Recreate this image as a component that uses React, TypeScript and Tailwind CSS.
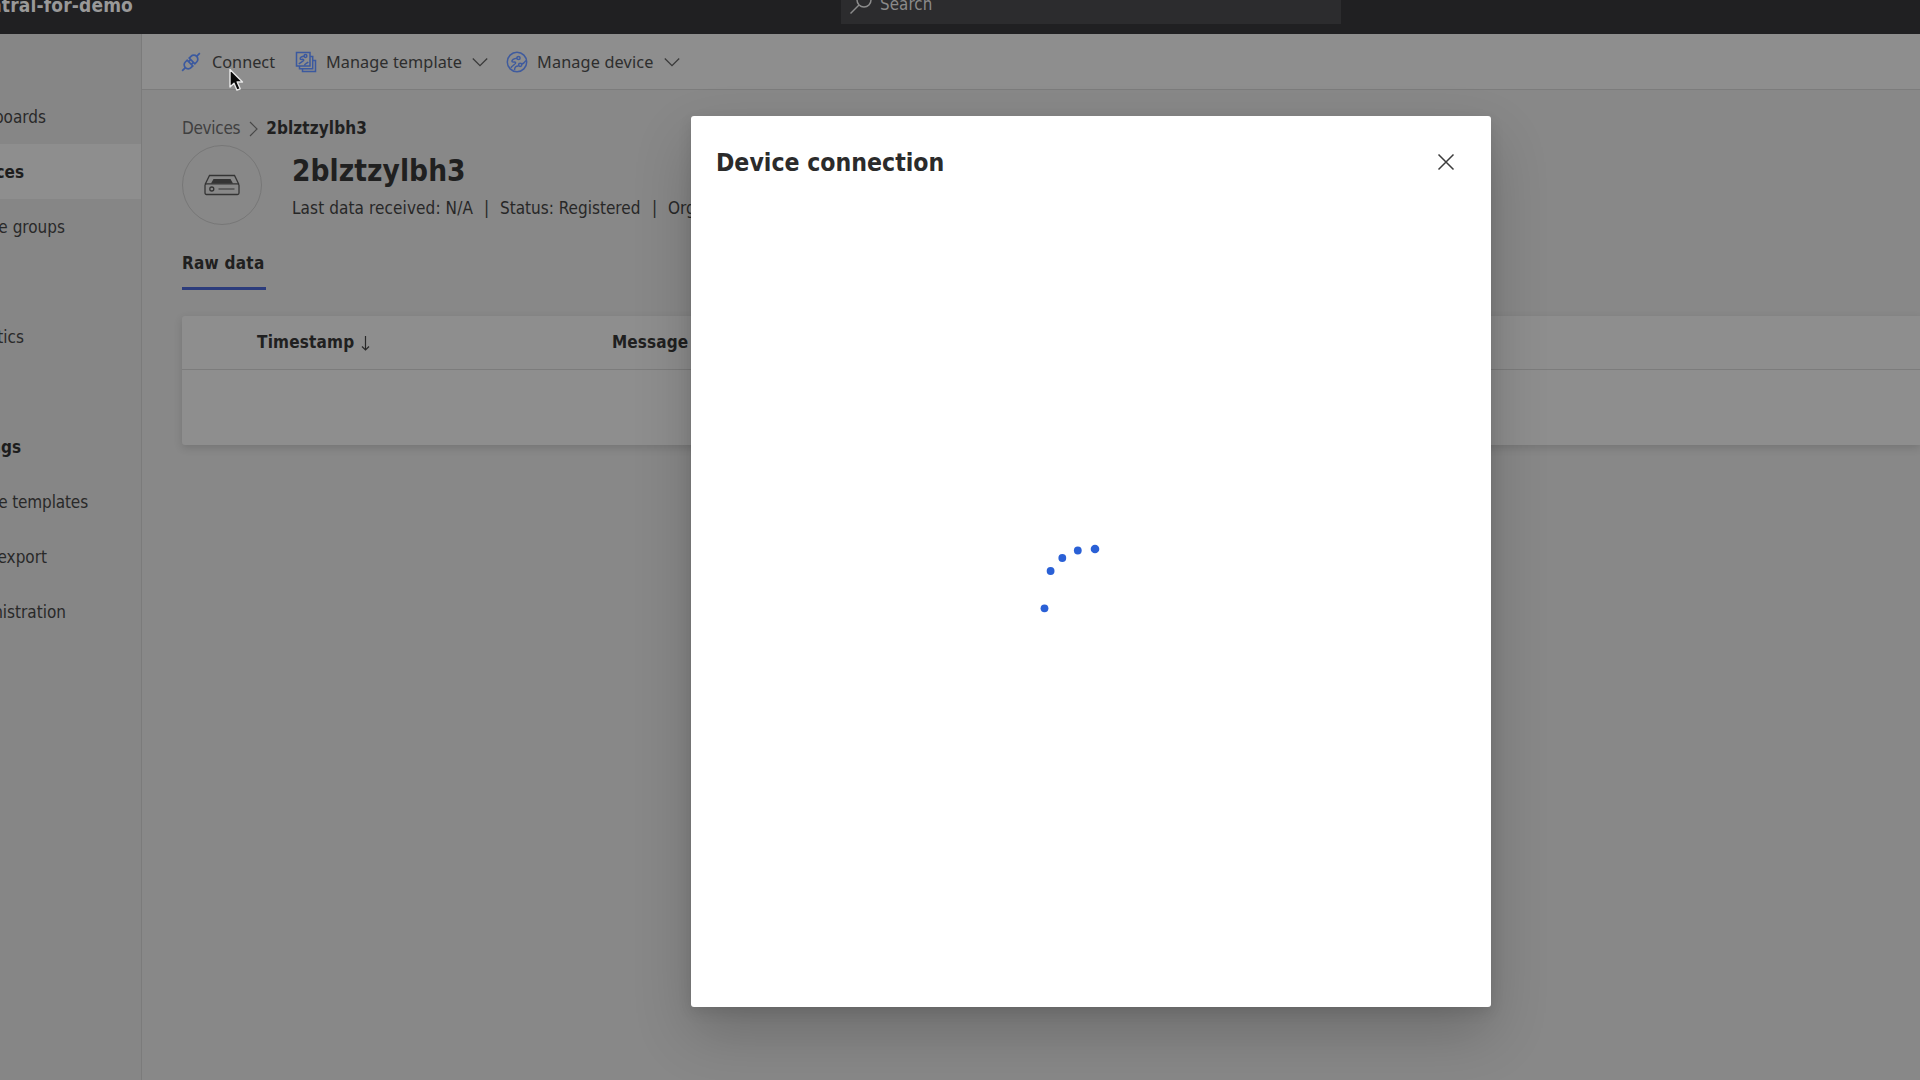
import type { ReactNode } from "react";

const tahoma = "font-['DejaVu_Sans_Condensed','DejaVu_Sans',sans-serif]";

function PlugIcon() {
  return (
    <svg className="h-5 w-5 shrink-0" viewBox="0 0 20 20" fill="none" stroke="#3b599f" strokeWidth="1.700">
      <g transform="translate(10 10) rotate(-45)">
        <path d="M-12.500 0h4.500M8 0h4.500" />
        <path d="M-1.500-4h-2.500a4 4 0 0 0 0 8h2.500zM1.500-4h2.500a4 4 0 0 1 0 8h-2.500z" />
        <path d="M-1.500-2h3M-1.500 2h3" />
      </g>
    </svg>
  );
}

function TemplateIcon() {
  return (
    <svg className="h-[22px] w-[22px] shrink-0" viewBox="0 0 22 22" fill="none" stroke="#3b599f" strokeWidth="1.500">
      <path d="M1.500 1.500h13.500v13.500h-13.500zM4.500 15v2.800h13.200V5.500h-2.700M7.500 17.800v2.700h13V9.500h-2.800" />
      <circle cx="10.500" cy="5" r="1.400" />
      <path d="M9.200 5.300c-2.600.2-4.400 1.400-4 2.600.5 1.200 2.600-.1 3.400.8.800 1.100-1.800 2-4.800 4.300M9.500 14.500c.2-2.200 2.400-1.800 3.700-3.500" />
    </svg>
  );
}

function DeviceIcon() {
  return (
    <svg className="h-[22px] w-[22px] shrink-0" viewBox="0 0 22 22" fill="none" stroke="#3f5b9e" strokeWidth="1.500">
      <circle cx="11" cy="11" r="9.700" />
      <circle cx="12.500" cy="7" r="1.600" />
      <path d="M11 7.300c-3.200.2-5.500 1.700-5 3.200.5 1.400 2.800-.1 3.600 1 .8 1.300-2.600 2.300-4.800 5.300M8.500 19c.2-3 1.800-4.200 4-4M16 13c1.800-.3 2.600-1.500 4-3.500" />
      <circle cx="14.200" cy="13.800" r="1.600" />
    </svg>
  );
}

function Chevron() {
  return (
    <svg className="h-4 w-4 shrink-0" viewBox="0 0 16 16" fill="none" stroke="#3a3a3a" strokeWidth="1.300">
      <path d="M.8 4.500L8 11.700l7.200-7.200" />
    </svg>
  );
}

function GatewayIcon() {
  return (
    <svg className="-mt-px h-[22px] w-9" viewBox="0 0 36 22" fill="none" stroke="#343434" strokeWidth="1.300">
      <path d="M1.200 10.200L5.500 1.500h25l4.300 8.700" />
      <rect x="1" y="9.800" width="34" height="10.700" rx="1.500" />
      <path d="M9.500 5h17l2.500 4.500h-22z" fill="#343434" stroke="none" />
      <circle cx="7.800" cy="15" r="2" />
      <path d="M14.500 15h16" stroke="#484848" />
    </svg>
  );
}

function NavItem({ children, active, bold }: { children?: ReactNode; active?: boolean; bold?: boolean }) {
  return (
    <div className={`h-[55px] shrink-0 ${active ? "bg-[#8e8e8e]" : ""}`}>
      <div className={`flex h-full items-center pt-[2px] whitespace-nowrap ${active || bold ? "font-bold text-[#1d1d1d]" : "text-[#292929]"}`}>
        {children}
      </div>
    </div>
  );
}

/* Label whose right edge sits at a given column; the start runs off the screen. */
function NavLabel({ width, children }: { width: string; children: ReactNode }) {
  return <span className={`flex justify-end ${width}`}>{children}</span>;
}

function Sidebar() {
  return (
    <nav className="flex w-[142px] shrink-0 flex-col overflow-hidden border-r border-[#7b7b7b] bg-[#868686] pt-[55px] text-[17px]">
      <NavItem><NavLabel width="w-[46px]">Dashboards</NavLabel></NavItem>
      <NavItem active><NavLabel width="w-6">Devices</NavLabel></NavItem>
      <NavItem><NavLabel width="w-[65px]">Device groups</NavLabel></NavItem>
      <NavItem />
      <NavItem><NavLabel width="w-6">Analytics</NavLabel></NavItem>
      <NavItem />
      <NavItem bold><NavLabel width="w-[21px]">Settings</NavLabel></NavItem>
      <NavItem><NavLabel width="w-[88px] tracking-[-0.13px]">Device templates</NavLabel></NavItem>
      <NavItem><NavLabel width="w-[47px]">Data export</NavLabel></NavItem>
      <NavItem><NavLabel width="w-[66px]">Administration</NavLabel></NavItem>
    </nav>
  );
}

function Toolbar() {
  return (
    <div className="flex h-14 items-center border-b border-[#7c7c7c] bg-[#8e8e8e] pl-[39px] font-['Noto_Sans',sans-serif] text-[16.250px] text-[#2d2d2d]">
      <PlugIcon />
      <span className="ml-[11px] w-[83px] pt-px">Connect</span>
      <TemplateIcon />
      <span className="ml-[9px] w-[146px] pt-px tracking-[0.07px] whitespace-nowrap">Manage template</span>
      <Chevron />
      <span className="w-[18px]" />
      <DeviceIcon />
      <span className="ml-[9px] w-[127px] pt-px tracking-[0.15px] whitespace-nowrap">Manage device</span>
      <Chevron />
    </div>
  );
}

function DataTable() {
  return (
    <div className="mt-[26px] h-[129px] rounded-l-[3px] bg-[#8e8e8e] shadow-[0_3px_8px_rgba(0,0,0,0.14)]">
      <div className="flex h-[54px] items-center border-b border-[#7c7c7c] pl-[75px] text-[17px] font-bold text-[#202020]">
        <div className="flex w-[355px] items-center gap-[7px]">
          <span className="tracking-[0.2px]">Timestamp</span>
          <svg className="h-4 w-[9px]" viewBox="0 0 9 16" fill="none" stroke="#292929" strokeWidth="1.200">
            <path d="M4.500 1v14M1 11.500L4.500 15 8 11.500" />
          </svg>
        </div>
        <span className="tracking-[0.1px] whitespace-nowrap">Message type</span>
      </div>
    </div>
  );
}

function DevicePage() {
  return (
    <section className="pl-10">
      <div className="mt-[27px] flex h-6 items-center text-[17px]">
        <span className="tracking-[-0.300px] text-[#404040]">Devices</span>
        <svg className="ml-[9px] h-4 w-[9px]" viewBox="0 0 9 16" fill="none" stroke="#484848" strokeWidth="1.200">
          <path d="M1 1l7 7-7 7" />
        </svg>
        <span className="ml-2 font-bold tracking-[0.1px] text-[#202020]">2blztzylbh3</span>
      </div>
      <div className="mt-1 flex h-20">
        <div className="flex h-20 w-20 items-center justify-center rounded-full border border-[#777777]">
          <GatewayIcon />
        </div>
        <div className="ml-[30px] flex flex-col pt-2">
          <h1 className="h-9 text-[29.500px] leading-9 font-bold tracking-[0.07px] text-[#202020]">2blztzylbh3</h1>
          <div className="mt-[8px] flex h-6 items-center text-[17px] whitespace-nowrap text-[#272727]">
            <span className="w-[192px] tracking-[0.1px]">Last data received: N/A</span>
            <span className="w-4">|</span>
            <span className="w-[152px]">Status: Registered</span>
            <span className="w-4">|</span>
            <span>Organization: N/A</span>
          </div>
        </div>
      </div>
      <div className="mt-[26px] h-[39px] w-[84px] border-b-[3px] border-[#2c3c7c] text-[17px] font-bold whitespace-nowrap text-[#202020]">
        <span className="leading-6 tracking-[0.250px]">Raw data</span>
      </div>
      <DataTable />
    </section>
  );
}

const dots = [
  [51, 5, 4.3],
  [33.8, 6.5, 3.9],
  [18.3, 14, 3.9],
  [6.6, 27, 3.9],
  [0.5, 64.3, 3.9],
];

function ConnectionDialog() {
  return (
    <div className="absolute top-[116px] left-[691px] h-[891px] w-[800px] rounded-[3px] bg-white shadow-[0_26px_58px_rgba(0,0,0,0.2),0_5px_14px_rgba(0,0,0,0.1)]">
      <div className="flex items-center justify-between pt-7 pr-9 pl-[25px]">
        <h2 className="h-9 pt-px text-[24.600px] leading-9 font-bold text-[#2b2b2b]">Device connection</h2>
        <svg className="-mt-px h-[18px] w-[18px]" viewBox="0 0 18 18" fill="none" stroke="#3c3c3c" strokeWidth="1.500">
          <path d="M1.500 1.500l15 15M16.500 1.500l-15 15" />
        </svg>
      </div>
      <div className="flex justify-center pt-[364px] pr-[30px]">
        <svg className="h-[80px] w-[64px] overflow-visible" viewBox="0 0 64 80" fill="#2a60d6">
          {dots.map(([x, y, r]) => <circle key={x} cx={x} cy={y} r={r} />)}
        </svg>
      </div>
    </div>
  );
}

export default function App() {
  return (
    <div className={`relative flex h-[1080px] w-[1920px] flex-col overflow-hidden bg-[#888888] ${tahoma}`}>
      <header className="flex h-[34px] shrink-0 bg-[#202022]">
        <div className="flex w-[133px] shrink-0 justify-end text-[19px] leading-6 font-bold tracking-[0.150px] whitespace-nowrap text-[#999999]">
          <span className="-mt-[7px]">iot-central-for-demo</span>
        </div>
        <div className="ml-[708px] flex h-6 w-[500px] bg-[#2c2c2e] pl-[9px]">
          <svg className="-mt-[7px] h-[22px] w-[22px]" viewBox="0 0 22 22" fill="none" stroke="#8c8c8c" strokeWidth="1.500">
            <circle cx="14" cy="7" r="7" />
            <path d="M9 12l-8.500 8.500" />
          </svg>
          <span className="-mt-[8px] ml-2 text-[16.800px] leading-6 tracking-[0.100px] text-[#8a8a8a]">Search</span>
        </div>
      </header>
      <div className="flex min-h-0 flex-1">
        <Sidebar />
        <main className="min-w-0 flex-1">
          <Toolbar />
          <DevicePage />
        </main>
      </div>
      <ConnectionDialog />
      <svg className="absolute top-[68px] left-[228px] h-6 w-4" viewBox="0 0 16 24" fill="#080808" stroke="#e8e8e8" strokeWidth="1.400">
        <path d="M2 1.500v17.500l4-3.800 3 7 3.200-1.400-3-6.800h5.300z" strokeLinejoin="round" />
      </svg>
    </div>
  );
}
